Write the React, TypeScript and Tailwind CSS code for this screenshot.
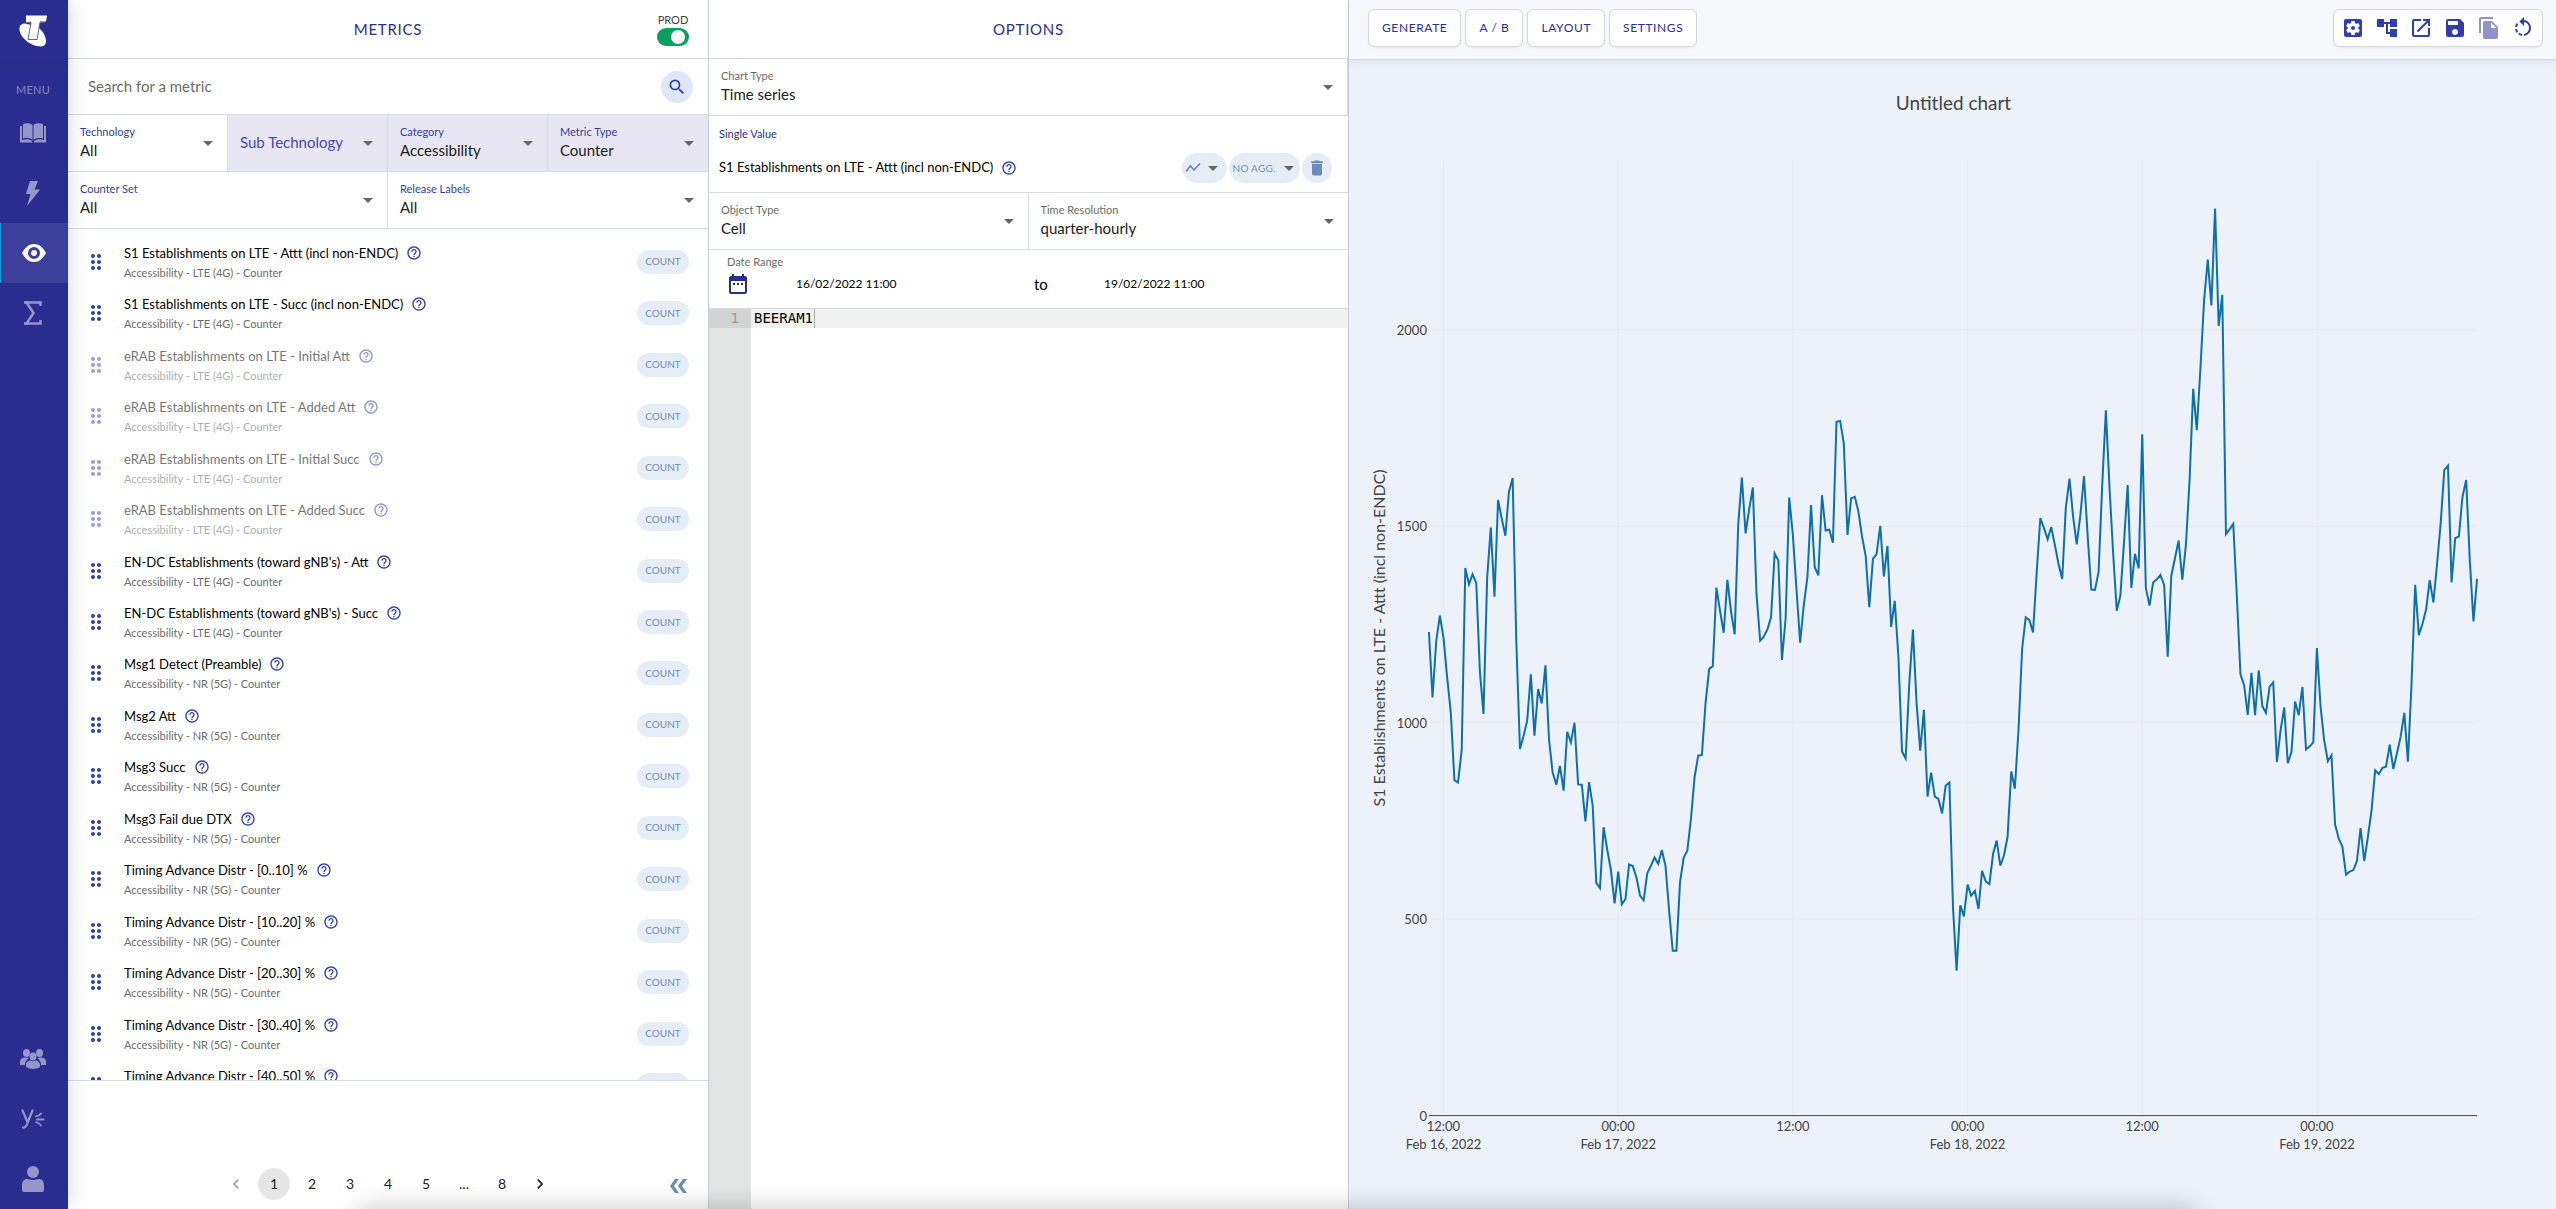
import { useState } from 'react'
import type { ReactNode } from 'react'
import {
  MdAccountTree,
  MdArrowDropDown,
  MdChevronLeft,
  MdChevronRight,
  MdDateRange,
  MdDelete,
  MdDragIndicator,
  MdFileCopy,
  MdHelpOutline,
  MdOpenInNew,
  MdRotateLeft,
  MdSave,
  MdSearch,
  MdSettingsApplications,
} from 'react-icons/md'

interface Metric {
  name: string
  detail: string
  dimmed?: boolean
}

const LTE = 'Accessibility - LTE (4G) - Counter'
const NR = 'Accessibility - NR (5G) - Counter'

const METRICS: Metric[] = [
  { name: 'S1 Establishments on LTE - Attt (incl non-ENDC)', detail: LTE },
  { name: 'S1 Establishments on LTE - Succ (incl non-ENDC)', detail: LTE },
  { name: 'eRAB Establishments on LTE - Initial Att', detail: LTE, dimmed: true },
  { name: 'eRAB Establishments on LTE - Added Att', detail: LTE, dimmed: true },
  { name: 'eRAB Establishments on LTE - Initial Succ', detail: LTE, dimmed: true },
  { name: 'eRAB Establishments on LTE - Added Succ', detail: LTE, dimmed: true },
  { name: "EN-DC Establishments (toward gNB's) - Att", detail: LTE },
  { name: "EN-DC Establishments (toward gNB's) - Succ", detail: LTE },
  { name: 'Msg1 Detect (Preamble)', detail: NR },
  { name: 'Msg2 Att', detail: NR },
  { name: 'Msg3 Succ', detail: NR },
  { name: 'Msg3 Fail due DTX', detail: NR },
  { name: 'Timing Advance Distr - [0..10] %', detail: NR },
  { name: 'Timing Advance Distr - [10..20] %', detail: NR },
  { name: 'Timing Advance Distr - [20..30] %', detail: NR },
  { name: 'Timing Advance Distr - [30..40] %', detail: NR },
  { name: 'Timing Advance Distr - [40..50] %', detail: NR },
]

// One value per quarter hour, from Feb 16 11:00 to Feb 19 11:00
const SERIES = [
  1231, 1064, 1207, 1273, 1216, 1116, 1025, 854, 848, 930, 1394, 1352, 1378, 1355, 1130, 1022,
  1370, 1497, 1321, 1567, 1520, 1476, 1588, 1623, 1211, 933, 966, 1005, 1123, 967, 1086, 1049,
  1146, 957, 873, 842, 890, 827, 977, 950, 1000, 843, 842, 749, 849, 789, 592, 579,
  734, 676, 626, 540, 621, 538, 551, 639, 635, 607, 560, 548, 617, 636, 657, 641,
  676, 635, 521, 420, 420, 594, 657, 674, 757, 862, 916, 918, 1048, 1137, 1144, 1344,
  1284, 1229, 1364, 1284, 1225, 1506, 1624, 1482, 1543, 1599, 1329, 1209, 1219, 1237, 1268, 1431,
  1413, 1160, 1266, 1573, 1479, 1338, 1204, 1300, 1370, 1554, 1396, 1375, 1579, 1489, 1491, 1458,
  1766, 1768, 1711, 1478, 1571, 1575, 1538, 1475, 1425, 1294, 1417, 1429, 1501, 1372, 1450, 1244,
  1310, 1166, 927, 909, 1102, 1237, 1048, 929, 1033, 812, 873, 812, 806, 769, 840, 848,
  530, 369, 535, 507, 588, 560, 572, 526, 623, 596, 589, 666, 700, 636, 662, 709,
  876, 832, 984, 1189, 1268, 1261, 1230, 1384, 1521, 1495, 1467, 1498, 1452, 1404, 1366, 1547,
  1621, 1525, 1454, 1529, 1628, 1475, 1339, 1338, 1384, 1602, 1795, 1601, 1430, 1285, 1323, 1461,
  1605, 1343, 1430, 1393, 1734, 1343, 1298, 1357, 1365, 1376, 1351, 1168, 1375, 1419, 1464, 1364,
  1453, 1618, 1850, 1745, 1905, 2075, 2179, 2062, 2309, 2010, 2089, 1480, 1492, 1506, 1321, 1123,
  1095, 1020, 1127, 1019, 1133, 1042, 1025, 1092, 1103, 900, 980, 1039, 897, 925, 1054, 1019,
  1091, 932, 940, 950, 1190, 1040, 955, 902, 917, 741, 705, 685, 613, 621, 625, 648,
  732, 648, 709, 777, 879, 869, 885, 888, 944, 882, 923, 964, 1025, 901, 1099, 1351,
  1223, 1252, 1288, 1363, 1306, 1402, 1508, 1643, 1654, 1357, 1470, 1474, 1575, 1618, 1415, 1258,
  1366,
]

const X_TICKS = [
  { index: 4, time: '12:00', date: 'Feb 16, 2022' },
  { index: 52, time: '00:00', date: 'Feb 17, 2022' },
  { index: 100, time: '12:00' },
  { index: 148, time: '00:00', date: 'Feb 18, 2022' },
  { index: 196, time: '12:00' },
  { index: 244, time: '00:00', date: 'Feb 19, 2022' },
]

const PLOT = { left: 80, right: 1129, top: 100, bottom: 1056 }

function xAt(index: number) {
  return PLOT.left + (index * (PLOT.right - PLOT.left)) / (SERIES.length - 1)
}

function yAt(value: number) {
  return PLOT.bottom - value * 0.3932
}

function Logo() {
  return (
    <svg viewBox="0 0 28 31" className="w-7 h-8" aria-label="Telstra">
      <path d="M6 8C-1 8-1 16 4 22s12 9 18 9c5 0 6-5 4-10-1-4-4-7-8-10L6 8Z" fill="#fff" />
      <path d="M7 0h21l-1 6h-6l-3 18H9l3-18-5 1Z" fill="#fff" />
      <path d="M8 7h4L9 24h9l3-17h5" fill="none" stroke="#5a5cae" />
    </svg>
  )
}

function BookIcon() {
  return (
    <svg viewBox="0 0 26 20" className="w-[26px] h-5" fill="currentColor">
      <path d="M3 1c4-1.500 7-1 9.500 1v15c-2.500-2-5.500-2.500-9.500-1.500ZM23 1c-4-1.500-7-1-9.500 1v15c2.500-2 5.500-2.500 9.500-1.500Z" />
      <path d="M0 3h2v14c4-1 7-1 10 1v1.500H0ZM26 3h-2v14c-4-1-7-1-10 1v1.500h12Z" />
    </svg>
  )
}

function BoltIcon() {
  return (
    <svg viewBox="0 0 16 25" className="w-4 h-[25px]" fill="currentColor">
      <path d="M5 0h8L9.500 8.500H15L2 25l3.500-12H1Z" />
    </svg>
  )
}

function EyeIcon() {
  return (
    <svg viewBox="0 0 24 18" className="w-6 h-[18px]">
      <path d="M0 9c3-5 6-9 12-9s9 4 12 9c-3 5-6 9-12 9S3 14 0 9Z" fill="#fff" />
      <circle cx="12" cy="9" r="4.500" fill="#fff" stroke="#3d409b" strokeWidth="3" />
    </svg>
  )
}

function SigmaIcon() {
  return (
    <svg viewBox="0 0 18 24" className="w-[18px] h-6" fill="none" stroke="currentColor" strokeWidth="2.500">
      <path d="M16.500 5V1.500H2.500L9.500 12 2.500 22.500h14V19" />
      <path d="M0 1.500h4M0 22.500h4" />
    </svg>
  )
}

function PeopleIcon() {
  return (
    <svg viewBox="0 0 26 20" className="w-[26px] h-5" fill="currentColor">
      <ellipse cx="6.500" cy="4" rx="3.500" ry="4" />
      <ellipse cx="19.500" cy="4" rx="3.500" ry="4" />
      <path d="M0 16v-3c0-3 2-4.500 5-4.500 2 0 3 .5 3.500 1C6 11 5 13 5 16ZM26 16v-3c0-3-2-4.500-5-4.500-2 0-3 .5-3.500 1C20 11 21 13 21 16Z" />
      <ellipse cx="13" cy="7.500" rx="3.500" ry="4" />
      <path d="M6 18v-2c0-3 2-4.500 4.500-4.500l2.500 1 2.500-1C18 11.500 20 13 20 16v2c-4 2.500-10 2.500-14 0Z" />
    </svg>
  )
}

function YammerIcon() {
  return (
    <svg viewBox="0 0 24 20" className="w-6 h-5" fill="none" stroke="currentColor" strokeWidth="2.200" strokeLinecap="round">
      <path d="M1.500 1.500 6.500 13M11.500 1.500 6.500 14c-1 3-2 5-4.500 4.500" />
      <path d="M15 7.500c2-.5 4-1.500 5-3M16 10.500h6.500M15 13c2 .5 4 2 5 3.500" strokeWidth="1.800" />
    </svg>
  )
}

function PersonIcon() {
  return (
    <svg viewBox="0 0 22 26" className="w-[22px] h-[26px]" fill="currentColor">
      <ellipse cx="11" cy="6" rx="6" ry="6" />
      <path d="M0 24v-4c0-5 2-7 5-7 2 0 3 1 6 1s4-1 6-1c3 0 5 2 5 7v4c0 1.500-1 2-2 2H2c-1 0-2-.5-2-2Z" />
    </svg>
  )
}

function TrendIcon() {
  return (
    <svg viewBox="0 0 16 12" className="w-4 h-3" fill="none" stroke="#6b8db3" strokeWidth="1.800">
      <path d="M1 9.500 5.500 4 9 8l6-6.500" />
    </svg>
  )
}

function CollapseIcon() {
  return (
    <svg viewBox="0 0 17 14" className="w-[17px] h-[14px]" fill="currentColor">
      <path d="M5 0h4L4 7l5 7H5L0 7ZM13 0h4l-5 7 5 7h-4L8 7Z" />
    </svg>
  )
}

function NavButton({ label, active, children }: { label: string; active?: boolean; children: ReactNode }) {
  return (
    <button
      aria-label={label}
      className={
        active
          ? 'h-[60px] w-full pr-[2px] flex items-center justify-center bg-[#3d409b] border-l border-[#00a8e8] text-white'
          : 'h-[60px] w-full pr-[2px] flex items-center justify-center text-[#9596ca]'
      }
    >
      {children}
    </button>
  )
}

function Sidebar() {
  return (
    <nav className="bg-[#2a2d8f] flex flex-col items-center z-10 shadow-[0_0_20px_rgba(40,70,70,0.2)]">
      <div className="h-[62px] w-full pr-[2px] flex items-center justify-center shadow-[0_2px_6px_rgba(0,0,0,0.08)]">
        <Logo />
      </div>
      <span className="mt-5 mb-[5px] pr-[2px] text-[11px] leading-4 tracking-wide text-[#8486c2]">MENU</span>
      <div className="w-full">
        <NavButton label="Library"><BookIcon /></NavButton>
        <NavButton label="Actions"><BoltIcon /></NavButton>
        <NavButton label="View" active><EyeIcon /></NavButton>
        <NavButton label="Formulas"><SigmaIcon /></NavButton>
      </div>
      <div className="w-full mt-auto">
        <NavButton label="Groups"><PeopleIcon /></NavButton>
        <NavButton label="Yammer"><YammerIcon /></NavButton>
        <NavButton label="Profile"><PersonIcon /></NavButton>
      </div>
    </nav>
  )
}

interface SelectFieldProps {
  id: string
  label: string
  value?: string
  tone?: 'blue' | 'grey'
  filled?: boolean
}

function SelectField({ id, label, value, tone = 'blue', filled }: SelectFieldProps) {
  return (
    <div
      className={`flex items-center h-[57px] pl-3 pr-[7px] border-b border-r border-[#d6dbe2] last:border-r-0 ${
        filled ? 'bg-[#e8e6f3]' : 'bg-white'
      }`}
    >
      <div className="flex-1 min-w-0 flex flex-col pb-[2px]">
        {value && (
          <label htmlFor={id} className={`text-[11px] leading-4 ${tone === 'blue' ? 'text-[#3040a5]' : 'text-[#6b6b6b]'}`}>
            {label}
          </label>
        )}
        <select
          id={id}
          aria-label={label}
          className={`appearance-none bg-transparent text-[15px] leading-5 outline-none ${value ? 'text-[#212121]' : 'text-[#4648ab]'}`}
        >
          <option>{value || label}</option>
        </select>
      </div>
      <MdArrowDropDown className="size-6 text-[#666]" />
    </div>
  )
}

function MetricRow({ metric }: { metric: Metric }) {
  return (
    <li className="flex-1 flex items-center pl-4 pr-[19px]">
      <MdDragIndicator className={`size-6 text-[#303fa8] ${metric.dimmed ? 'opacity-50' : ''}`} />
      <div className={`flex-1 ml-4 ${metric.dimmed ? 'opacity-55' : ''}`}>
        <div className="flex items-center gap-2 mb-[2px] text-[13px] leading-5 text-black">
          {metric.name}
          <MdHelpOutline className="size-4 text-[#303fa8]" />
        </div>
        <div className="text-[11px] leading-4 text-[#6b6b6b]">{metric.detail}</div>
      </div>
      <span className="w-[52px] h-6 rounded-full bg-[#e6edf7] text-[#6b8db3] text-[10px] flex items-center justify-center">
        COUNT
      </span>
    </li>
  )
}

function Pagination() {
  const [page, setPage] = useState(1)
  const pageClass = 'size-8 rounded-full text-sm text-[#212121] flex items-center justify-center'

  return (
    <div className="mt-auto mb-[9px] grid grid-cols-[1fr_auto_1fr] items-center">
      <div className="col-start-2 flex gap-[6px]">
        <button aria-label="Previous page" className={`${pageClass} opacity-40`} onClick={() => setPage(Math.max(1, page - 1))}>
          <MdChevronLeft className="size-5" />
        </button>
        {[1, 2, 3, 4, 5].map((n) => (
          <button key={n} className={`${pageClass} ${n === page ? 'bg-[#e6e6e6]' : ''}`} onClick={() => setPage(n)}>
            {n}
          </button>
        ))}
        <span className={pageClass}>...</span>
        <button className={`${pageClass} ${page === 8 ? 'bg-[#e6e6e6]' : ''}`} onClick={() => setPage(8)}>8</button>
        <button aria-label="Next page" className={pageClass} onClick={() => setPage(Math.min(8, page + 1))}>
          <MdChevronRight className="size-5" />
        </button>
      </div>
      <button aria-label="Collapse panel" className="justify-self-end mr-[21px] pt-1 text-[#6b8db3]">
        <CollapseIcon />
      </button>
    </div>
  )
}

function MetricsPanel() {
  return (
    <section className="min-w-0 min-h-0 bg-white flex flex-col">
      <header className="h-[59px] shrink-0 border-b border-[#d6dbe2] grid grid-cols-[1fr_auto_1fr] items-center">
        <h2 className="col-start-2 text-[15px] tracking-wider text-[#2a2d93]">METRICS</h2>
        <label className="justify-self-end mr-[19px] flex flex-col items-center text-[11px] leading-4 text-[#444]">
          PROD
          <input
            type="checkbox"
            role="switch"
            defaultChecked
            className="appearance-none w-8 h-[18px] rounded-full bg-[#08a060] flex items-center justify-end px-1 before:size-[14px] before:rounded-full before:bg-white"
          />
        </label>
      </header>
      <div className="h-14 shrink-0 border-b border-[#d6dbe2] flex items-center pl-5 pr-[15px]">
        <input
          type="text"
          aria-label="Search for a metric"
          placeholder="Search for a metric"
          className="flex-1 text-[15px] outline-none placeholder:text-[#6b6b6b]"
        />
        <button aria-label="Search" className="size-8 rounded-full bg-[#e0e6f6] flex items-center justify-center text-[#303fa8]">
          <MdSearch className="size-5" />
        </button>
      </div>
      <div className="grid grid-cols-4">
        <SelectField id="technology" label="Technology" value="All" />
        <SelectField id="sub-technology" label="Sub Technology" filled />
        <SelectField id="category" label="Category" value="Accessibility" filled />
        <SelectField id="metric-type" label="Metric Type" value="Counter" filled />
      </div>
      <div className="grid grid-cols-2">
        <SelectField id="counter-set" label="Counter Set" value="All" />
        <SelectField id="release-labels" label="Release Labels" value="All" />
      </div>
      <div className="h-[852px] overflow-hidden border-b border-[#d6dbe2] pt-[7px]">
        <ul className="h-[875px] flex flex-col">
          {METRICS.map((metric) => (
            <MetricRow key={metric.name} metric={metric} />
          ))}
        </ul>
      </div>
      <Pagination />
    </section>
  )
}

function OptionsPanel() {
  const pill = 'h-[30px] rounded-full bg-[#e6edf7] text-[#6b8db3] flex items-center justify-center'

  return (
    <section className="min-w-0 min-h-0 bg-white border-l border-[#c9ced6] flex flex-col">
      <header className="h-[59px] shrink-0 border-b border-[#d6dbe2] flex items-center justify-center">
        <h2 className="text-[15px] tracking-wider text-[#2a2d93]">OPTIONS</h2>
      </header>
      <SelectField id="chart-type" label="Chart Type" value="Time series" tone="grey" />
      <div className="h-[77px] shrink-0 border-b border-[#d6dbe2] pl-[10px] pr-4 pt-[6px] flex flex-col">
        <h3 className="text-[11px] leading-6 text-[#2a2d93]">Single Value</h3>
        <div className="flex items-center mt-[7px] gap-[2px]">
          <span className="flex-1 flex items-center gap-2 text-[13px]">
            S1 Establishments on LTE - Attt (incl non-ENDC)
            <MdHelpOutline className="size-4 text-[#303fa8]" />
          </span>
          <button aria-label="Line style" className={`${pill} w-[45px]`}>
            <TrendIcon />
            <MdArrowDropDown className="size-6 text-[#666]" />
          </button>
          <div className={`${pill} w-[71px]`}>
            <select aria-label="Aggregation" className="appearance-none text-[10px] tracking-wide outline-none">
              <option>NO AGG.</option>
            </select>
            <MdArrowDropDown className="size-6 -mr-1 text-[#666]" />
          </div>
          <button aria-label="Delete" className={`${pill} w-[30px]`}>
            <MdDelete className="size-5" />
          </button>
        </div>
      </div>
      <div className="grid grid-cols-2">
        <SelectField id="object-type" label="Object Type" value="Cell" tone="grey" />
        <SelectField id="time-resolution" label="Time Resolution" value="quarter-hourly" tone="grey" />
      </div>
      <div className="h-[59px] shrink-0 border-b border-[#d6dbe2] px-[17px]">
        <div className="pt-1 pl-px text-[11px] leading-4 text-[#6b6b6b]">Date Range</div>
        <div className="flex items-center h-7">
          <MdDateRange className="size-6 text-[#2a2d93]" />
          <input aria-label="From" defaultValue="16/02/2022 11:00" className="ml-[46px] w-[198px] text-xs outline-none" />
          <span className="w-[110px] pl-10 text-[15px] leading-5">to</span>
          <input aria-label="To" defaultValue="19/02/2022 11:00" className="w-[200px] text-xs outline-none" />
        </div>
      </div>
      <div className="flex-1 flex font-['DejaVu_Sans_Mono',monospace] text-sm leading-[19px]">
        <div className="w-[42px] bg-[#e3e5e4] text-[#999]">
          <div className="bg-[#d2d4d3] pr-3 text-right">1</div>
        </div>
        <div className="flex-1">
          <div className="bg-[#f1f1f1] pl-[3px]">
            <textarea
              aria-label="Objects"
              rows={1}
              defaultValue="BEERAM1"
              className="block w-[61px] h-[19px] resize-none overflow-hidden whitespace-nowrap border-r border-[#aaa] text-black outline-none"
            />
          </div>
        </div>
      </div>
    </section>
  )
}

function Chart() {
  const points = SERIES.map((value, i) => `${xAt(i).toFixed(1)},${yAt(value).toFixed(1)}`).join(' ')

  return (
    <svg viewBox="0 0 1208 1149" className="w-full h-full" role="img" aria-label="Untitled chart" fill="#444">
      <text x="605" y="50" textAnchor="middle" fontSize="19">Untitled chart</text>
      {X_TICKS.map((tick) => (
        <g key={tick.index}>
          <line x1={xAt(tick.index)} x2={xAt(tick.index)} y1={PLOT.top} y2={PLOT.bottom} stroke="#e9eaee" />
          <text x={xAt(tick.index)} y="1071" textAnchor="middle" fontSize="13">{tick.time}</text>
          {tick.date && <text x={xAt(tick.index)} y="1089" textAnchor="middle" fontSize="13">{tick.date}</text>}
        </g>
      ))}
      {[0, 500, 1000, 1500, 2000].map((value) => (
        <g key={value}>
          {value > 0 && <line x1={PLOT.left} x2={PLOT.right} y1={yAt(value)} y2={yAt(value)} stroke="#e9eaee" />}
          <text x="78" y={yAt(value) + 5} textAnchor="end" fontSize="13">{value}</text>
        </g>
      ))}
      <line x1={PLOT.left} x2={PLOT.right} y1={PLOT.bottom} y2={PLOT.bottom} stroke="#444" />
      <polyline points={points} fill="none" stroke="#0f6fab" strokeWidth="2" />
      <text transform="translate(36 578) rotate(-90)" textAnchor="middle" fontSize="16">
        S1 Establishments on LTE - Attt (incl non-ENDC)
      </text>
    </svg>
  )
}

const CHART_ACTIONS = [
  { label: 'Chart settings', Icon: MdSettingsApplications },
  { label: 'Hierarchy', Icon: MdAccountTree },
  { label: 'Open in new window', Icon: MdOpenInNew },
  { label: 'Save', Icon: MdSave },
  { label: 'Copy', Icon: MdFileCopy, disabled: true },
  { label: 'Reset', Icon: MdRotateLeft },
]

function ChartPanel() {
  return (
    <section className="min-w-0 min-h-0 bg-[#ecf1fa] border-l border-[#c9ced6] flex flex-col">
      <div className="h-[60px] shrink-0 bg-[#f6f8fc] border-b border-[#cdd6e4] shadow-[0_1px_6px_rgba(90,120,180,0.15)] flex items-start pt-[9px] pl-[19px] pr-[13px] gap-1">
        {['GENERATE', 'A / B', 'LAYOUT', 'SETTINGS'].map((label) => (
          <button
            key={label}
            className="h-[38px] px-[13px] rounded-md border border-[#d3d5da] bg-white text-xs tracking-wider text-[#2a2d93] shadow-xs"
          >
            {label}
          </button>
        ))}
        <div className="ml-auto h-[38px] px-[2px] rounded-md border border-[#d3d5da] bg-white shadow-xs flex items-center">
          {CHART_ACTIONS.map(({ label, Icon, disabled }) => (
            <button
              key={label}
              aria-label={label}
              disabled={disabled}
              className="w-[34px] h-9 flex items-center justify-center text-[#303fa8] disabled:text-[#9092c9]"
            >
              <Icon className="size-6" />
            </button>
          ))}
        </div>
      </div>
      <div className="flex-1 min-h-0">
        <Chart />
      </div>
    </section>
  )
}

export default function App() {
  return (
    <div className="relative h-screen overflow-hidden grid grid-cols-[68px_640fr_640fr_1208fr] grid-rows-1 font-[Lato,sans-serif] text-black">
      <Sidebar />
      <MetricsPanel />
      <OptionsPanel />
      <ChartPanel />
      <div className="absolute inset-x-[14%] -bottom-5 h-5 z-20 rounded-full shadow-[0_0_24px_rgba(0,0,0,0.25)] pointer-events-none" />
    </div>
  )
}
